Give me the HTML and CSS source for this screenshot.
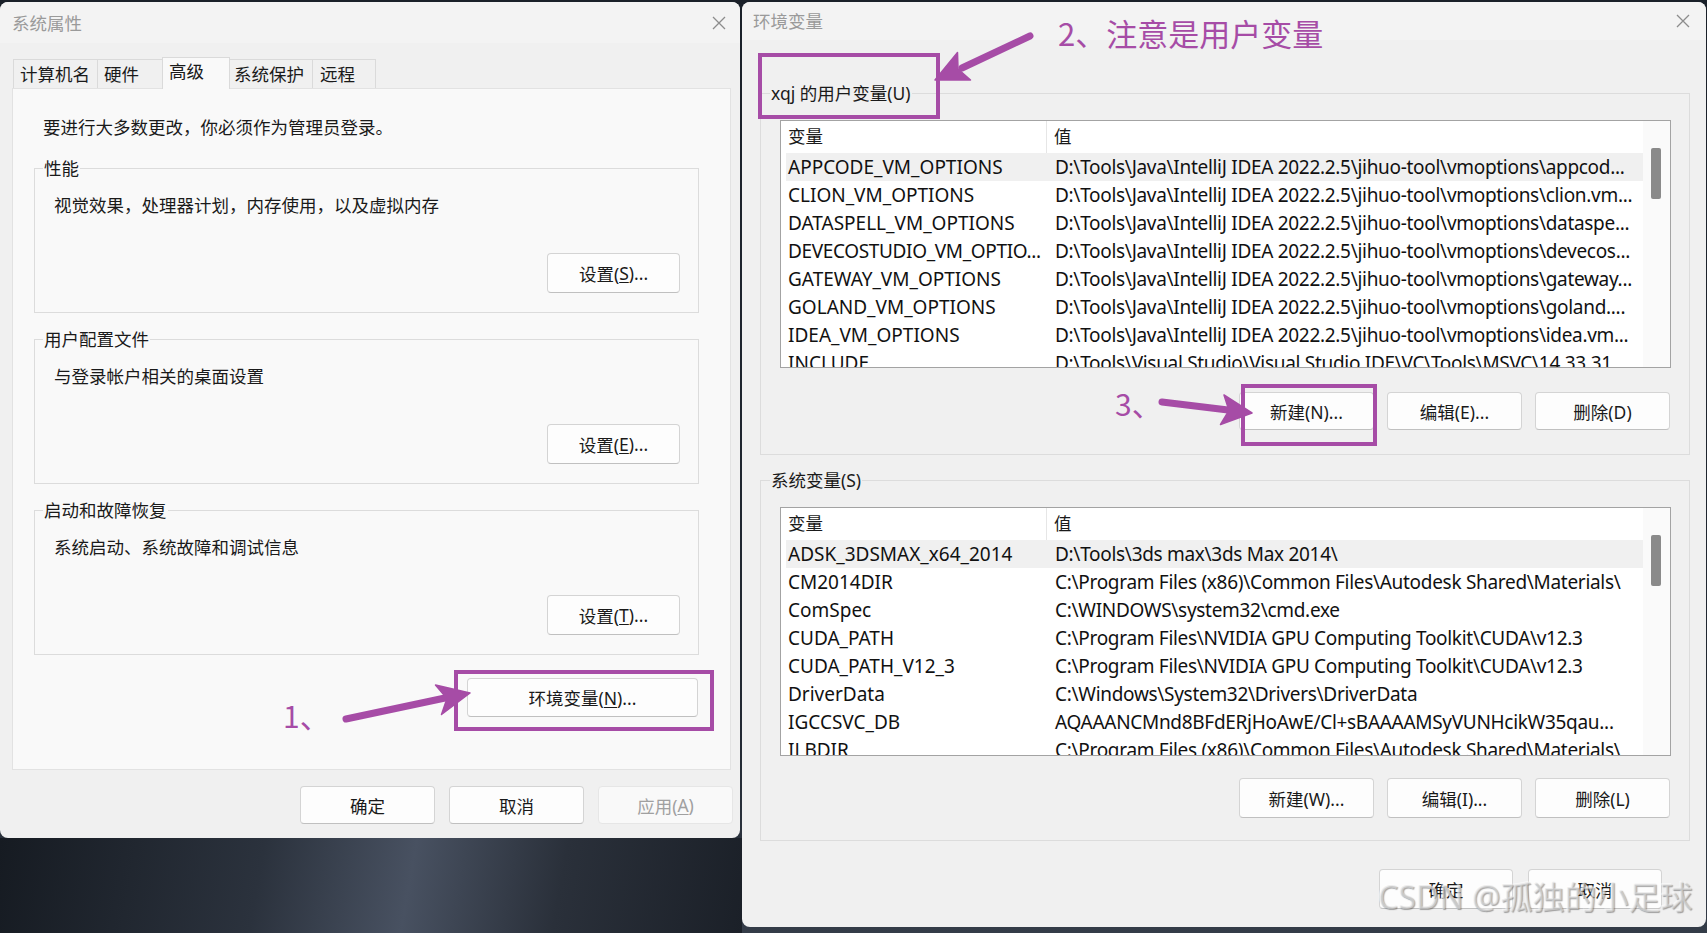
FILE: index.html
```html
<!DOCTYPE html>
<html lang="zh-CN">
<head>
<meta charset="utf-8">
<title>系统属性 / 环境变量</title>
<link rel="stylesheet" href="styles.css">
</head>
<body>
<div class="desk-glow"></div>

<div class="win win-sys">
  <div class="titlebar">
    <span class="title">系统属性</span>
    <svg class="close" viewBox="0 0 16 16"><path d="M2 2 L14 14 M14 2 L2 14" /></svg>
  </div>
  <div class="tabs">
    <div class="tab t1">计算机名</div>
    <div class="tab t2">硬件</div>
    <div class="tab t3 sel">高级</div>
    <div class="tab t4">系统保护</div>
    <div class="tab t5">远程</div>
  </div>
  <div class="panel">
    <div class="intro">要进行大多数更改，你必须作为管理员登录。</div>
    <div class="group">
      <div class="glabel">性能</div>
      <div class="gtext">视觉效果，处理器计划，内存使用，以及虚拟内存</div>
      <div class="gbtnrow"><div class="btn btn-set">设置(<u>S</u>)...</div></div>
    </div>
    <div class="group">
      <div class="glabel">用户配置文件</div>
      <div class="gtext">与登录帐户相关的桌面设置</div>
      <div class="gbtnrow"><div class="btn btn-set">设置(<u>E</u>)...</div></div>
    </div>
    <div class="group">
      <div class="glabel">启动和故障恢复</div>
      <div class="gtext">系统启动、系统故障和调试信息</div>
      <div class="gbtnrow"><div class="btn btn-set">设置(<u>T</u>)...</div></div>
    </div>
    <div class="envrow"><div class="btn btn-env">环境变量(<u>N</u>)...</div></div>
  </div>
  <div class="footer">
    <div class="btn btn-foot">确定</div>
    <div class="btn btn-foot">取消</div>
    <div class="btn btn-foot disabled">应用(<u>A</u>)</div>
  </div>
</div>

<div class="win win-env">
  <div class="titlebar">
    <span class="title">环境变量</span>
    <svg class="close" viewBox="0 0 16 16"><path d="M2 2 L14 14 M14 2 L2 14" /></svg>
  </div>
  <div class="envbody">
    <div class="egroup g-user">
      <div class="glabel">xqj 的用户变量(U)</div>
      <div class="list">
        <div class="list-main">
          <div class="lhead"><div class="c1">变量</div><div class="c2">值</div></div>
          <div class="row hl"><div class="c1">APPCODE_VM_OPTIONS</div><div class="c2">D:\Tools\Java\IntelliJ IDEA 2022.2.5\jihuo-tool\vmoptions\appcod...</div></div>
          <div class="row"><div class="c1">CLION_VM_OPTIONS</div><div class="c2">D:\Tools\Java\IntelliJ IDEA 2022.2.5\jihuo-tool\vmoptions\clion.vm...</div></div>
          <div class="row"><div class="c1">DATASPELL_VM_OPTIONS</div><div class="c2">D:\Tools\Java\IntelliJ IDEA 2022.2.5\jihuo-tool\vmoptions\dataspe...</div></div>
          <div class="row"><div class="c1 tight">DEVECOSTUDIO_VM_OPTIO...</div><div class="c2">D:\Tools\Java\IntelliJ IDEA 2022.2.5\jihuo-tool\vmoptions\devecos...</div></div>
          <div class="row"><div class="c1">GATEWAY_VM_OPTIONS</div><div class="c2">D:\Tools\Java\IntelliJ IDEA 2022.2.5\jihuo-tool\vmoptions\gateway...</div></div>
          <div class="row"><div class="c1">GOLAND_VM_OPTIONS</div><div class="c2">D:\Tools\Java\IntelliJ IDEA 2022.2.5\jihuo-tool\vmoptions\goland....</div></div>
          <div class="row"><div class="c1">IDEA_VM_OPTIONS</div><div class="c2">D:\Tools\Java\IntelliJ IDEA 2022.2.5\jihuo-tool\vmoptions\idea.vm...</div></div>
          <div class="row"><div class="c1">INCLUDE</div><div class="c2">D:\Tools\Visual Studio\Visual Studio IDE\VC\Tools\MSVC\14.33.31...</div></div>
        </div>
        <div class="scroll"><div class="thumb"></div></div>
      </div>
      <div class="ebtnrow">
        <div class="btn btn-e">新建(N)...</div>
        <div class="btn btn-e">编辑(E)...</div>
        <div class="btn btn-e">删除(D)</div>
      </div>
    </div>

    <div class="egroup g-sys">
      <div class="glabel">系统变量(S)</div>
      <div class="list list-sys">
        <div class="list-main">
          <div class="lhead"><div class="c1">变量</div><div class="c2">值</div></div>
          <div class="row hl"><div class="c1">ADSK_3DSMAX_x64_2014</div><div class="c2">D:\Tools\3ds max\3ds Max 2014\</div></div>
          <div class="row"><div class="c1">CM2014DIR</div><div class="c2">C:\Program Files (x86)\Common Files\Autodesk Shared\Materials\</div></div>
          <div class="row"><div class="c1">ComSpec</div><div class="c2">C:\WINDOWS\system32\cmd.exe</div></div>
          <div class="row"><div class="c1">CUDA_PATH</div><div class="c2">C:\Program Files\NVIDIA GPU Computing Toolkit\CUDA\v12.3</div></div>
          <div class="row"><div class="c1">CUDA_PATH_V12_3</div><div class="c2">C:\Program Files\NVIDIA GPU Computing Toolkit\CUDA\v12.3</div></div>
          <div class="row"><div class="c1">DriverData</div><div class="c2">C:\Windows\System32\Drivers\DriverData</div></div>
          <div class="row"><div class="c1">IGCCSVC_DB</div><div class="c2">AQAAANCMnd8BFdERjHoAwE/Cl+sBAAAAMSyVUNHcikW35qau...</div></div>
          <div class="row"><div class="c1">ILBDIR</div><div class="c2">C:\Program Files (x86)\Common Files\Autodesk Shared\Materials\</div></div>
        </div>
        <div class="scroll"><div class="thumb"></div></div>
      </div>
      <div class="ebtnrow ebtnrow-sys">
        <div class="btn btn-e btn-e40">新建(W)...</div>
        <div class="btn btn-e btn-e40">编辑(I)...</div>
        <div class="btn btn-e btn-e40">删除(L)</div>
      </div>
    </div>

    <div class="efooter">
      <div class="btn btn-ef">确定</div>
      <div class="btn btn-ef">取消</div>
    </div>
  </div>
</div>

<svg class="annot" viewBox="0 0 1707 933" width="1707" height="933">
  <rect x="456" y="672" width="256" height="57" />
  <rect x="760" y="55" width="178" height="62" />
  <rect x="1243" y="386" width="132" height="58" />
  <line x1="346" y1="719" x2="445" y2="698" />
  <polygon points="470,693 441.5,714.5 447,698.5 435.5,685" />
  <line x1="1030" y1="36" x2="962" y2="68" />
  <polygon points="935,80 970.5,80 958,69 957.5,52.5" />
  <line x1="1162" y1="402" x2="1228" y2="410" />
  <polygon points="1252,413 1220.5,424.5 1229,410.5 1224,395" />
</svg>
<div class="num n1">1、</div>
<div class="num n2">2、注意是用户变量</div>
<div class="num n3">3、</div>

<div class="watermark">CSDN @孤独的小足球</div>
</body>
</html>
```

FILE: styles.css
```css
* { box-sizing: border-box; }
html, body { margin: 0; padding: 0; }
body {
  width: 1707px;
  height: 933px;
  position: relative;
  overflow: hidden;
  background: linear-gradient(180deg, #1a2029 0%, #222933 80%, #343c48 100%);
  font-family: "Noto Sans", "Noto Sans CJK SC", sans-serif;
  font-size: 17.5px;
  color: #1a1a1a;
}
.desk-glow {
  position: absolute;
  left: 0; top: 838px;
  width: 742px; height: 95px;
  background: linear-gradient(100deg, #161b22 0%, #2b323d 35%, #485161 55%, #2a303a 75%, #1b2028 100%);
}
u { text-decoration-thickness: 1px; text-underline-offset: 2px; }

/* windows */
.win {
  position: absolute;
  display: flex;
  flex-direction: column;
  background: #f0f0f0;
  border-radius: 8px;
  overflow: hidden;
}
.win-sys { left: 0; top: 2px; width: 740px; height: 836px; }
.win-env { left: 742px; top: 2px; width: 964px; height: 925px; }

.titlebar {
  flex: none;
  display: flex;
  align-items: center;
  justify-content: space-between;
  background: #f3f3f3;
}
.win-sys .titlebar { height: 41px; padding: 0 13px 0 12px; }
.win-env .titlebar { height: 38px; padding: 0 15px 0 11px; }
.title { color: #9a9a9a; line-height: 24px; }
.close { width: 16px; height: 16px; }
.close path { stroke: #8c8c8c; stroke-width: 1.3; fill: none; }

/* tabs */
.tabs {
  flex: none;
  display: flex;
  align-items: flex-end;
  height: 31px;
  margin: 14px 0 0 13px;
}
.tab {
  height: 29px;
  border: 1px solid #dadada;
  border-bottom: none;
  border-right: none;
  padding-left: 6px;
  line-height: 28px;
  background: #f0f0f0;
  white-space: nowrap;
}
.tab.t5 { border-right: 1px solid #dadada; }
.t1 { width: 84px; }
.t2 { width: 65px; }
.t3 { width: 68px; }
.t4 { width: 82px; }
.t5 { width: 64px; padding-left: 7px; }
.t4 { padding-left: 4px; }
.tab.sel {
  height: 32px;
  margin-bottom: -1px;
  background: #f9f9f9;
  border-right: 1px solid #dadada;
  position: relative;
  z-index: 1;
  line-height: 26px;
}
.tab.sel + .tab { border-left: none; }

.panel {
  flex: none;
  margin-left: 12px;
  width: 719px;
  height: 682px;
  background: #f9f9f9;
  border: 1px solid #e2e2e2;
  padding: 26px 31px 0 21px;
}
.intro { margin-left: 9px; line-height: 24px; }

.group {
  position: relative;
  border: 1px solid #dcdcdc;
  margin-top: 29px;
  padding: 24px 18px 19px 19px;
}
.group + .group { margin-top: 26px; }
.glabel {
  position: absolute;
  left: 8px;
  top: -13px;
  line-height: 24px;
  padding: 0 1px;
  background: #f9f9f9;
  white-space: nowrap;
}
.gtext { line-height: 24px; }
.gbtnrow { display: flex; justify-content: flex-end; margin-top: 36px; }

.btn {
  display: flex;
  align-items: center;
  justify-content: center;
  background: #fdfdfd;
  border: 1px solid #d4d4d4;
  border-bottom-color: #c0c0c0;
  border-radius: 4px;
  white-space: nowrap;
  color: #1a1a1a;
}
.btn-set { width: 133px; height: 40px; }
.envrow { display: flex; justify-content: flex-end; margin: 23px 1px 0 0; }
.btn-env { width: 231px; height: 39px; }

.footer {
  flex: none;
  display: flex;
  justify-content: flex-end;
  gap: 14px;
  padding-right: 7px;
  margin-top: 16px;
}
.btn-foot { width: 135px; height: 38px; }
.btn-foot.disabled {
  color: #a0a0a0;
  background: #f9f9f9;
  border-color: #e6e6e6;
}

/* environment variables dialog */
.envbody { padding: 0 16px 0 18px; }
.egroup {
  position: relative;
  border: 1px solid #dcdcdc;
  padding: 26px 18px 24px 19px;
}
.g-user { margin-top: 53px; }
.g-sys { margin-top: 25px; padding-bottom: 22px; }
.egroup .glabel { left: 9px; background: #f0f0f0; }

.list {
  display: flex;
  height: 248px;
  border: 1px solid #a3a3a3;
  background: #ffffff;
}
.list-sys { height: 249px; }
.list-main { flex: 1; min-width: 0; overflow: hidden; padding-left: 5px; }
.lhead { display: flex; height: 32px; line-height: 31px; }
.lhead .c1 { border-right: 1px solid #e6e6e6; }
.c1 {
  flex: none;
  width: 261px;
  padding-left: 2px;
  white-space: nowrap;
  overflow: hidden;
}
.c1.tight { letter-spacing: -0.35px; }
.c2 {
  flex: 1;
  min-width: 0;
  padding-left: 7px;
  white-space: nowrap;
  overflow: hidden;
}
.row { display: flex; height: 28px; line-height: 28px; font-size: 19px; color: #111; }
.row.hl { background: #f0f0f0; }
.row .c2 { padding-left: 8px; letter-spacing: -0.3px; }
.scroll { flex: none; width: 27px; background: #fafafa; }
.thumb {
  width: 10px;
  height: 51px;
  margin: 27px 0 0 8px;
  background: #8a8a8a;
  border-radius: 2px;
}

.ebtnrow { display: flex; justify-content: flex-end; gap: 13px; margin-top: 24px; padding-right: 1px; }
.ebtnrow-sys { margin-top: 22px; }
.btn-e { width: 135px; height: 38px; }
.btn-e40 { height: 40px; }

.efooter { display: flex; justify-content: flex-end; gap: 15px; margin-top: 28px; padding-right: 28px; }
.btn-ef { width: 134px; height: 40px; }

/* annotations */
.annot { position: absolute; left: 0; top: 0; pointer-events: none; }
.annot rect { fill: none; stroke: #a64ca6; stroke-width: 4; }
.annot line { stroke: #a64ca6; stroke-width: 7; stroke-linecap: round; }
.annot polygon { fill: #a64ca6; stroke: #a64ca6; stroke-width: 1.5; stroke-linejoin: round; }
.num {
  position: absolute;
  color: #a64ca6;
  font-family: "Noto Sans CJK SC", "Noto Sans", sans-serif;
  font-size: 30px;
  line-height: 40px;
  white-space: nowrap;
}
.n1 { left: 283px; top: 695px; }
.n2 { left: 1058px; top: 13px; font-size: 31px; }
.n3 { left: 1115px; top: 383px; }

.watermark {
  position: absolute;
  left: 1378px;
  top: 877px;
  font-family: "Noto Sans", "Noto Sans CJK SC", sans-serif;
  font-size: 32px;
  line-height: 40px;
  color: rgba(230, 230, 230, 0.55);
  text-shadow: 1px 1px 1px rgba(60, 60, 60, 0.45), -1px -1px 0 rgba(255, 255, 255, 0.5);
  white-space: nowrap;
  pointer-events: none;
}
```
